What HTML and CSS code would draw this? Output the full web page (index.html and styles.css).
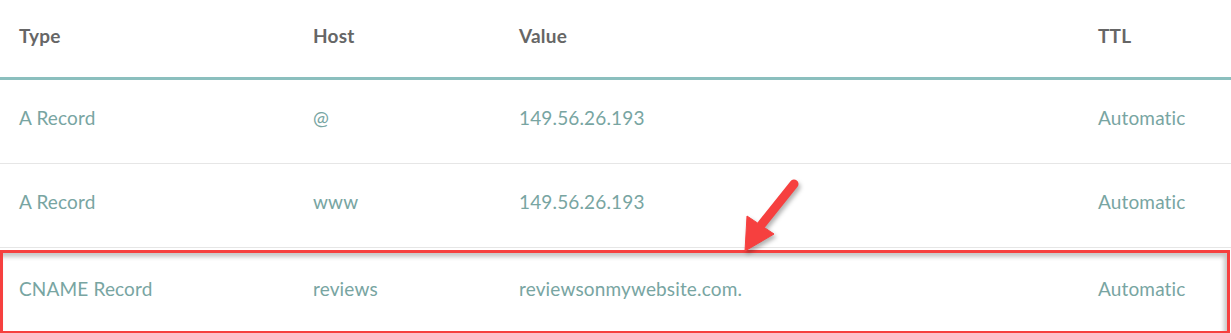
FILE: index.html
```html
<!DOCTYPE html>
<html>
<head>
<meta charset="utf-8">
<link rel="stylesheet" href="styles.css">
</head>
<body>
<div class="page">
  <div class="table">
    <div class="row head">
      <div class="c type">Type</div>
      <div class="c host">Host</div>
      <div class="c value">Value</div>
      <div class="c ttl">TTL</div>
    </div>
    <div class="row">
      <div class="c type">A Record</div>
      <div class="c host">@</div>
      <div class="c value">149.56.26.193</div>
      <div class="c ttl">Automatic</div>
    </div>
    <div class="row">
      <div class="c type">A Record</div>
      <div class="c host">www</div>
      <div class="c value">149.56.26.193</div>
      <div class="c ttl">Automatic</div>
    </div>
    <div class="row last">
      <div class="c type">CNAME Record</div>
      <div class="c host">reviews</div>
      <div class="c value">reviewsonmywebsite.com.</div>
      <div class="c ttl">Automatic</div>
    </div>
  </div>
  <div class="highlight"></div>
  <svg class="arrow" width="1231" height="333" viewBox="0 0 1231 333">
    <line x1="794" y1="184" x2="762" y2="224" stroke="#f6403f" stroke-width="9" stroke-linecap="round"/>
    <polygon points="745,251 747,216 774,234" fill="#f6403f" stroke="#f6403f" stroke-width="1" stroke-linejoin="round"/>
  </svg>
</div>
</body>
</html>
```
FILE: styles.css
```css
html, body {
  margin: 0;
  padding: 0;
  background: #ffffff;
}
.page {
  position: relative;
  width: 1231px;
  height: 333px;
  overflow: hidden;
  font-family: "Lato", "Open Sans", sans-serif;
}
.table {
  display: flex;
  flex-direction: column;
}
.row {
  display: flex;
  align-items: center;
  box-sizing: border-box;
  height: 84px;
  padding-bottom: 9px;
  border-bottom: 1px solid #e6e6e6;
  color: #78a5a2;
  font-size: 19px;
  font-weight: 400;
  letter-spacing: 0.15px;
}
.row.head {
  height: 80px;
  padding-bottom: 6px;
  border-bottom: 3px solid #8bbfbe;
  color: #666666;
  font-weight: 700;
  font-size: 19px;
  letter-spacing: 0.2px;
}
.row.last {
  height: 85px;
  padding-bottom: 4px;
  border-bottom: none;
}
.c.type { width: 294px; padding-left: 19px; }
.c.host { width: 206px; }
.c.value { width: 579px; }
.c.ttl { flex: 1; }
.highlight {
  position: absolute;
  left: 0;
  top: 250px;
  width: 1230px;
  height: 83px;
  box-sizing: border-box;
  border: 3px solid #f6403f;
  border-bottom-width: 2px;
  box-shadow: inset -3px 4px 4px rgba(0, 0, 0, 0.22);
}
.arrow {
  position: absolute;
  left: 0;
  top: 0;
  pointer-events: none;
  filter: drop-shadow(2px 3px 2px rgba(0, 0, 0, 0.3));
}
```
